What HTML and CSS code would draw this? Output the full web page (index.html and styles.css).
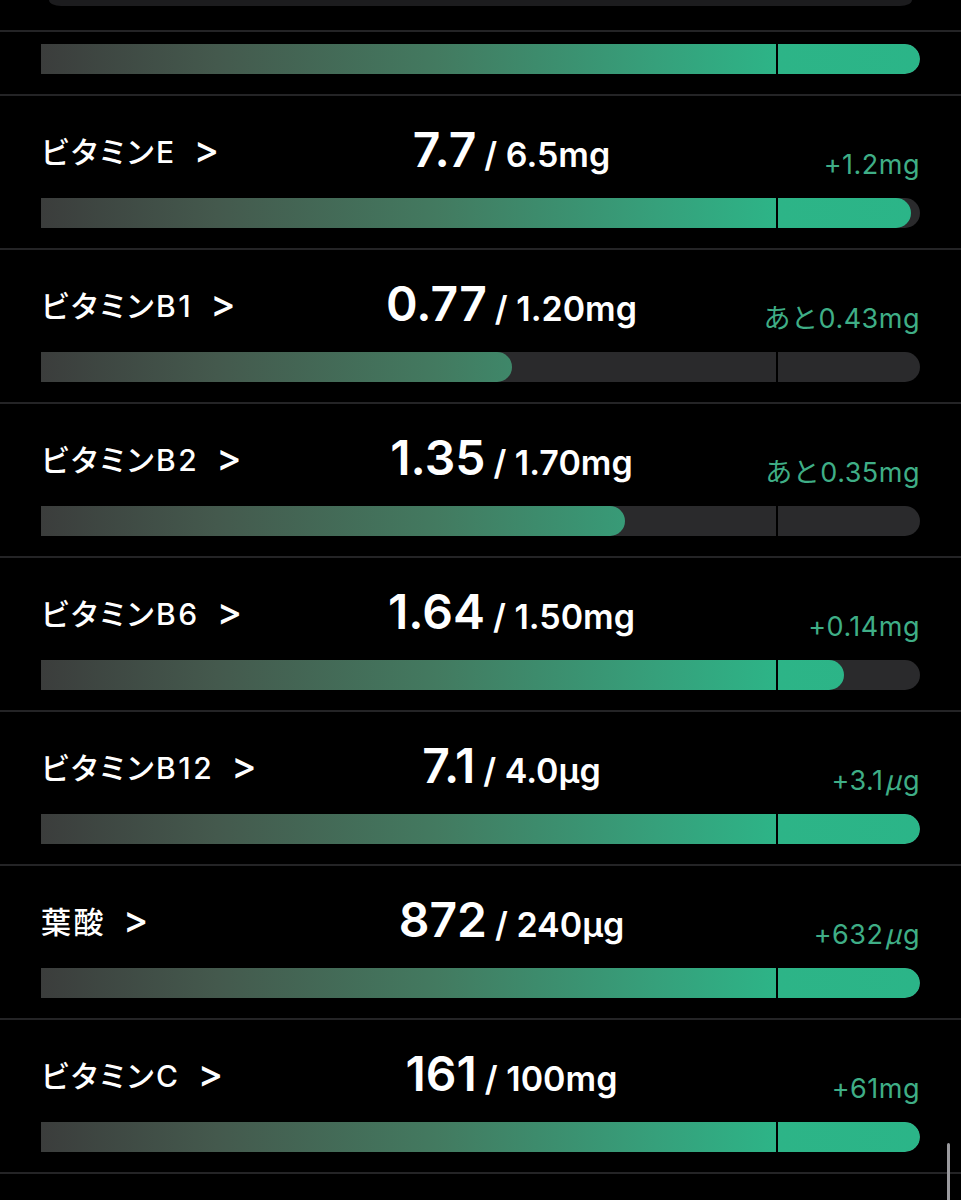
FILE: index.html
```html
<!DOCTYPE html>
<html lang="ja">
<head>
    <meta charset="UTF-8">
    <meta name="viewport" content="width=device-width, initial-scale=1.0">
    <title>ビタミン</title>
    <link rel="stylesheet" href="styles.css">
</head>
<body>
    <div class="card-tail"></div>

    <div class="list">
        <!-- 上のカードの続き -->
        <div class="row row-partial">
            <div class="track">
                <div class="fill" style="width: 100%"></div>
                <div class="marker"></div>
            </div>
        </div>

        <div class="row">
            <div class="head">
                <div class="name">ビタミンE<span class="chevron">&gt;</span></div>
                <div class="value"><span class="amount">7.7</span><span class="target">/ 6.5mg</span></div>
                <div class="diff">+1.2mg</div>
            </div>
            <div class="track">
                <div class="fill" style="width: 99.03%"></div>
                <div class="marker"></div>
            </div>
        </div>

        <div class="row">
            <div class="head">
                <div class="name">ビタミンB1<span class="chevron">&gt;</span></div>
                <div class="value"><span class="amount">0.77</span><span class="target">/ 1.20mg</span></div>
                <div class="diff">あと0.43mg</div>
            </div>
            <div class="track">
                <div class="fill" style="width: 53.64%"></div>
                <div class="marker"></div>
            </div>
        </div>

        <div class="row">
            <div class="head">
                <div class="name">ビタミンB2<span class="chevron">&gt;</span></div>
                <div class="value"><span class="amount">1.35</span><span class="target">/ 1.70mg</span></div>
                <div class="diff">あと0.35mg</div>
            </div>
            <div class="track">
                <div class="fill" style="width: 66.39%"></div>
                <div class="marker"></div>
            </div>
        </div>

        <div class="row">
            <div class="head">
                <div class="name">ビタミンB6<span class="chevron">&gt;</span></div>
                <div class="value"><span class="amount">1.64</span><span class="target">/ 1.50mg</span></div>
                <div class="diff">+0.14mg</div>
            </div>
            <div class="track">
                <div class="fill" style="width: 91.4%"></div>
                <div class="marker"></div>
            </div>
        </div>

        <div class="row">
            <div class="head">
                <div class="name">ビタミンB12<span class="chevron">&gt;</span></div>
                <div class="value"><span class="amount">7.1</span><span class="target">/ 4.0µg</span></div>
                <div class="diff">+3.1<span class="mu">μ</span>g</div>
            </div>
            <div class="track">
                <div class="fill" style="width: 100%"></div>
                <div class="marker"></div>
            </div>
        </div>

        <div class="row">
            <div class="head">
                <div class="name">葉酸<span class="chevron">&gt;</span></div>
                <div class="value"><span class="amount">872</span><span class="target">/ 240µg</span></div>
                <div class="diff">+632<span class="mu">μ</span>g</div>
            </div>
            <div class="track">
                <div class="fill" style="width: 100%"></div>
                <div class="marker"></div>
            </div>
        </div>

        <div class="row">
            <div class="head">
                <div class="name">ビタミンC<span class="chevron">&gt;</span></div>
                <div class="value"><span class="amount">161</span><span class="target">/ 100mg</span></div>
                <div class="diff">+61mg</div>
            </div>
            <div class="track">
                <div class="fill" style="width: 100%"></div>
                <div class="marker"></div>
            </div>
        </div>
    </div>

    <div class="scroll-thumb"></div>
</body>
</html>
```

FILE: styles.css
```css
body {
    margin: 0;
    padding: 0;
    min-height: 100vh;
    background: #000;
    color: #fff;
    font-family: 'Inter', 'Noto Sans CJK JP', sans-serif;
    overflow: hidden;
}

.card-tail {
    height: 6px;
    margin: 0 49px;
    background: #1c1c1e;
    border-radius: 0 0 12px 12px / 0 0 6px 6px;
}

.list {
    margin-top: 24px;
    border-bottom: 2px solid #242426;
}

.row {
    padding: 0 41px 20px;
    border-top: 2px solid #242426;
}

.row-partial {
    padding-top: 12px;
}

.head {
    height: 102px;
    display: grid;
    grid-template-columns: 1fr auto 1fr;
    align-items: end;
}

.name {
    font-family: 'Inter', 'Noto Sans CJK JP', sans-serif;
    font-size: 30px;
    font-weight: 500;
    line-height: 1;
    letter-spacing: 2.5px;
    font-feature-settings: "palt";
    margin-bottom: 31px;
    white-space: nowrap;
}

.chevron {
    font-size: 38px;
    font-weight: 500;
    line-height: 0;
    margin-left: 17px;
    letter-spacing: 0;
}

.value {
    padding-left: 62px;
    line-height: 1;
    margin-bottom: 24px;
    white-space: nowrap;
}

.amount {
    font-size: 48px;
    font-weight: 600;
    margin-right: 8px;
}

.target {
    font-size: 34px;
    font-weight: 600;
}

.diff {
    justify-self: end;
    font-size: 27px;
    font-weight: 400;
    line-height: 1;
    letter-spacing: 0.5px;
    color: #3fae86;
    margin-bottom: 20px;
    white-space: nowrap;
}

.mu {
    font-family: 'Noto Sans CJK JP', sans-serif;
    font-style: italic;
    margin: 0 1px;
}

.track {
    position: relative;
    height: 30px;
    background: #2a2a2c;
    border-radius: 0 15px 15px 0;
    overflow: hidden;
}

.fill {
    height: 100%;
    border-radius: 0 15px 15px 0;
    background: linear-gradient(90deg, #3b3d3c 0%, #44594d 20%, #437a60 45%, #36a07b 70%, #2db487 83.6%, #2bb588 100%);
    background-size: 879px 100%;
    background-repeat: no-repeat;
}

.marker {
    position: absolute;
    top: 0;
    bottom: 0;
    left: 83.6%;
    width: 2px;
    background: #000;
}

.scroll-thumb {
    position: fixed;
    right: 11px;
    top: 1143px;
    width: 3px;
    height: 70px;
    border-radius: 2px;
    background: #9a9a9e;
}
```
